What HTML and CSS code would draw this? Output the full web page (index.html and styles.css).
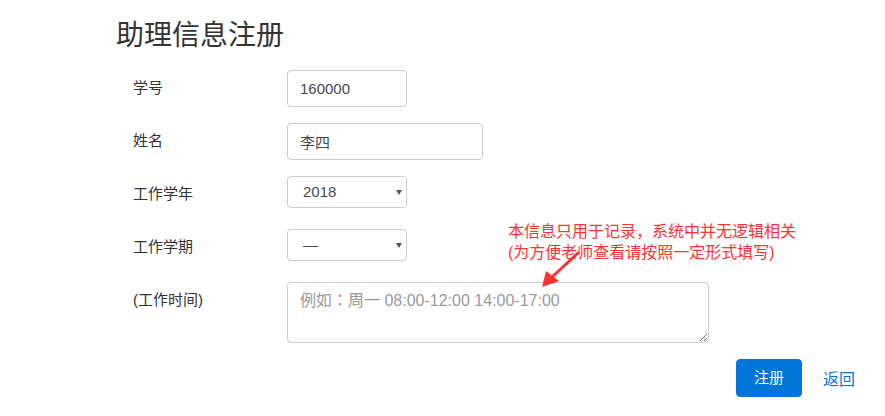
FILE: index.html
```html
<!DOCTYPE html>
<html lang="zh-CN">
<head>
<meta charset="utf-8">
<title>助理信息注册</title>
<link rel="stylesheet" href="styles.css">
</head>
<body>
<div class="page">
  <h3 class="title">助理信息注册</h3>
  <form class="form">
    <div class="row">
      <label class="label">学号</label>
      <input class="control w-sm" type="text" value="160000">
    </div>
    <div class="row">
      <label class="label">姓名</label>
      <input class="control w-md" type="text" value="李四">
    </div>
    <div class="row">
      <label class="label">工作学年</label>
      <div class="select-wrap">
        <select class="control select"><option>2018</option></select>
        <span class="caret"></span>
      </div>
    </div>
    <div class="row">
      <label class="label">工作学期</label>
      <div class="select-wrap">
        <select class="control select"><option>—</option></select>
        <span class="caret"></span>
      </div>
    </div>
    <div class="row">
      <label class="label">(工作时间)</label>
      <textarea class="control area" lang="zh-TW" placeholder="例如：周一 08:00-12:00 14:00-17:00"></textarea>
    </div>
    <div class="actions">
      <button class="btn" type="button">注册</button>
      <a class="link" href="#">返回</a>
    </div>
  </form>
  <div class="note">本信息只用于记录，系统中并无逻辑相关<br>(为方便老师查看请按照一定形式填写)</div>
  <svg class="arrow" width="60" height="50" viewBox="0 0 60 50">
    <line x1="46" y1="3" x2="20" y2="27" stroke="#f33" stroke-width="3" stroke-linecap="round"/>
    <polygon points="10,37 14,21 27,31" fill="#f33"/>
  </svg>
</div>
</body>
</html>
```
FILE: styles.css
```css
html, body {
  margin: 0;
  padding: 0;
  background: #fff;
}
body {
  font-family: "Liberation Sans", "Noto Sans CJK SC", sans-serif;
  font-size: 15px;
  color: #333;
}
.page {
  position: relative;
  width: 885px;
  height: 416px;
  padding: 20px 0 0 116px;
  box-sizing: border-box;
}
.title {
  margin: 0 0 19px 0;
  font-size: 28px;
  font-weight: 400;
  line-height: 31px;
  color: #333;
}
.form {
  width: 739px;
  display: flex;
  flex-direction: column;
  gap: 16px;
}
.row {
  display: flex;
  align-items: flex-start;
  min-height: 37px;
}
.label {
  width: 154px;
  padding: 7px 0 0 17px;
  line-height: 21px;
  flex: none;
}
.control {
  box-sizing: border-box;
  font-family: inherit;
  font-size: 15px;
  color: #464a4c;
  background: #fff;
  border: 1px solid #ccc;
  border-radius: 4px;
  padding: 8px 12px;
  line-height: 19px;
  height: 37px;
  margin: 0;
  outline: none;
}
.w-sm { width: 120px; }
.w-md { width: 196px; }
.select-wrap {
  position: relative;
  width: 120px;
}
.select {
  -webkit-appearance: none;
  appearance: none;
  width: 120px;
  height: 32px;
  padding: 5px 12px 5px 15px;
  line-height: 20px;
  color: #464a4c;
}
.caret {
  position: absolute;
  left: 109px;
  top: 14px;
  width: 0;
  height: 0;
  border-left: 3px solid transparent;
  border-right: 3px solid transparent;
  border-top: 5px solid #555;
}
.area {
  width: 422px;
  height: 61px;
  font-size: 16px;
  line-height: 19px;
  padding: 8px 12px;
  font-family: "Liberation Sans", "Noto Sans CJK TC", sans-serif;
  resize: vertical;
}
.area::placeholder {
  color: #9a9a9a;
}
.actions {
  display: flex;
  justify-content: flex-end;
  align-items: center;
  gap: 21px;
}
.btn {
  width: 66px;
  height: 38px;
  font-family: inherit;
  font-size: 15px;
  line-height: 20px;
  padding: 8px 0;
  color: #fff;
  background: #0275d8;
  border: 1px solid #0275d8;
  border-radius: 4px;
  cursor: pointer;
}
.link {
  color: #0275d8;
  text-decoration: none;
  font-size: 16px;
}
.note {
  position: absolute;
  left: 508px;
  top: 221px;
  font-size: 16px;
  line-height: 21px;
  color: #f33;
  white-space: nowrap;
}
.arrow {
  position: absolute;
  left: 532px;
  top: 250px;
}
```
